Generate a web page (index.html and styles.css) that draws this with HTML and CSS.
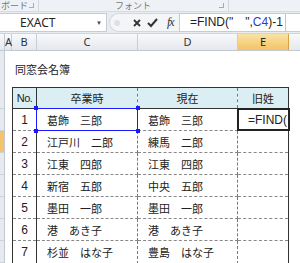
FILE: index.html
```html
<!DOCTYPE html>
<html lang="ja">
<head>
    <meta charset="UTF-8">
    <title>同窓会名簿</title>
    <link rel="stylesheet" href="styles.css">
</head>
<body>

<div class="ribbon">
    <div class="group clip"><span class="label">ボード</span><i class="launcher"></i></div>
    <div class="group font"><span class="label">フォント</span><i class="launcher"></i></div>
    <div class="group rest"></div>
</div>

<div class="formula-bar">
    <div class="name-box"><span>EXACT</span><span class="arrow">▼</span></div>
    <div class="fx-tools">
        <span class="grip"></span>
        <svg class="tool" width="10" height="10" viewBox="0 0 10 10">
            <path d="M2 2 L8 8 M8 2 L2 8" stroke="#333" stroke-width="1.8" fill="none"/>
        </svg>
        <svg class="tool" width="11" height="10" viewBox="0 0 11 10">
            <path d="M1 5 L4 8 L10 1" stroke="#333" stroke-width="2" fill="none"/>
        </svg>
        <span class="fx">fx</span>
    </div>
    <div class="formula">
        <span class="text">=FIND("　",<span class="ref">C4</span>)-1</span>
        <span class="caret"></span>
    </div>
</div>

<div class="col-headers">
    <div class="corner"></div>
    <div class="col a">A</div>
    <div class="col b">B</div>
    <div class="col c">C</div>
    <div class="col d">D</div>
    <div class="col e active">E</div>
    <div class="col f"></div>
</div>

<div class="sheet">
    <div class="row-heads">
        <div class="rh" style="height: 58px"></div>
        <div class="rh" style="height: 22px"></div>
        <div class="rh active" style="height: 22px"></div>
        <div class="rh"></div>
        <div class="rh"></div>
        <div class="rh"></div>
        <div class="rh"></div>
        <div class="rh"></div>
    </div>
    <div class="cells">
        <div class="title">同窓会名簿</div>
        <table class="roster">
            <colgroup>
                <col class="w-no">
                <col class="w-old">
                <col class="w-now">
                <col class="w-maiden">
            </colgroup>
            <tr class="head">
                <th class="no">No.</th>
                <th>卒業時</th>
                <th>現在</th>
                <th>旧姓</th>
            </tr>
            <tr>
                <td class="no">1</td>
                <td class="name ref-cell">葛飾　三郎<span class="sel"><i class="h tl"></i><i class="h tr"></i><i class="h bl"></i><i class="h br"></i></span></td>
                <td class="name">葛飾　三郎</td>
                <td class="editing"><span class="edit-box">=FIND(</span></td>
            </tr>
            <tr>
                <td class="no">2</td>
                <td class="name">江戸川　二郎</td>
                <td class="name">練馬　二郎</td>
                <td></td>
            </tr>
            <tr>
                <td class="no">3</td>
                <td class="name">江東　四郎</td>
                <td class="name">江東　四郎</td>
                <td></td>
            </tr>
            <tr>
                <td class="no">4</td>
                <td class="name">新宿　五郎</td>
                <td class="name">中央　五郎</td>
                <td></td>
            </tr>
            <tr>
                <td class="no">5</td>
                <td class="name">墨田　一郎</td>
                <td class="name">墨田　一郎</td>
                <td></td>
            </tr>
            <tr>
                <td class="no">6</td>
                <td class="name">港　あき子</td>
                <td class="name">港　あき子</td>
                <td></td>
            </tr>
            <tr>
                <td class="no">7</td>
                <td class="name">杉並　はな子</td>
                <td class="name">豊島　はな子</td>
                <td></td>
            </tr>
        </table>
    </div>
</div>

</body>
</html>
```

FILE: styles.css
```css
body {
    margin: 0;
    width: 300px;
    height: 263px;
    overflow: hidden;
    background-color: #fff;
    font-family: "Noto Sans CJK JP", "Noto Sans", sans-serif;
    color: #222;
}

/* リボン下端 */
.ribbon {
    display: flex;
    height: 11px;
    background-color: #eef1f5;
    border-bottom: 1px solid #d6dbe2;
    font-size: 9px;
    line-height: 11px;
    color: #777;
    overflow: hidden;
}

.group {
    display: flex;
    align-items: center;
    border-right: 1px solid #d2d7de;
    box-sizing: border-box;
}

.group.clip {
    width: 39px;
    padding-left: 1px;
}

.group.font {
    width: 190px;
    padding-left: 76px;
}

.group.rest {
    flex: 1;
    border-right: none;
}

.launcher {
    width: 4px;
    height: 4px;
    border-right: 1px solid #aaa;
    border-bottom: 1px solid #aaa;
    margin-left: auto;
    margin-right: 4px;
}

/* 数式バー */
.formula-bar {
    display: flex;
    height: 19px;
    padding: 1px 0;
    background-color: #e9ecf0;
    border-bottom: 1px solid #cfd5dc;
}

.name-box {
    display: flex;
    align-items: center;
    width: 107px;
    background-color: #fff;
    border: 1px solid #c5ccd4;
    border-left: none;
    box-sizing: border-box;
    font-family: "Noto Sans", sans-serif;
    font-size: 12px;
    padding-left: 20px;
    color: #222;
}

.name-box .arrow {
    margin-left: auto;
    margin-right: 4px;
    font-size: 6px;
    color: #444;
}

.fx-tools {
    display: flex;
    align-items: center;
    width: 70px;
    margin-left: 2px;
    background-color: #f4f5f7;
    border: 1px solid #d3d8de;
    border-right: none;
    border-radius: 10px 0 0 10px;
    box-sizing: border-box;
}

.grip {
    width: 6px;
    height: 6px;
    border-radius: 50%;
    background-color: #dde1e6;
    margin-left: 4px;
    margin-right: 12px;
}

.tool {
    margin-right: 5px;
}

.fx {
    font-family: "Liberation Serif", serif;
    font-style: italic;
    font-size: 12px;
    color: #333;
    margin-left: 4px;
    letter-spacing: -1px;
}

.formula {
    display: flex;
    align-items: center;
    flex: 1;
    background-color: #fff;
    border: 1px solid #c5ccd4;
    border-right: none;
    box-sizing: border-box;
    padding-left: 10px;
    font-family: "Liberation Sans", sans-serif;
    font-size: 12px;
    color: #222;
}

.formula .ref {
    color: #2b3bd6;
}

.caret {
    width: 1px;
    height: 17px;
    background-color: #c0c6cd;
    margin-left: 2px;
}

/* 列見出し */
.col-headers {
    display: flex;
    height: 16px;
    background: linear-gradient(#f8f9fb, #e5e8ed);
    border-bottom: 1px solid #c2c9d2;
    font-family: "Noto Sans", sans-serif;
    font-size: 11px;
    line-height: 16px;
    color: #333;
}

.corner {
    width: 4px;
    border-right: 1px solid #c2c9d2;
}

.col {
    text-align: center;
    border-right: 1px solid #c8ced6;
    box-sizing: border-box;
}

.col.a { width: 7px; }
.col.b { width: 25px; }
.col.c { width: 101px; }
.col.d { width: 100px; }
.col.e { width: 51px; }
.col.f { flex: 1; border-right: none; }

.col.active {
    background: linear-gradient(#fbe2a6, #f3c463);
    border-right-color: #d9a33c;
    color: #222;
}

/* シート */
.sheet {
    display: flex;
}

.row-heads {
    width: 4px;
    background-color: #e6e9ee;
    border-right: 1px solid #c2c9d2;
}

.rh {
    height: 22px;
    border-bottom: 1px solid #cdd3da;
    box-sizing: border-box;
}

.rh.active {
    background-color: #f4c46a;
}

.cells {
    flex: 1;
    font-size: 11px;
}

.title {
    padding: 11px 0 0 10px;
    height: 25px;
    line-height: 15px;
}

.roster {
    border-collapse: collapse;
    margin-left: 7px;
    table-layout: fixed;
    width: 277px;
}

.w-no { width: 24px; }
.w-old { width: 101px; }
.w-now { width: 100px; }
.w-maiden { width: 51px; }

.roster th,
.roster td {
    border-left: 1px dashed #777;
    border-right: 1px dashed #777;
    border-bottom: 1px dashed #888;
    height: 21px;
    padding: 0;
    font-weight: normal;
    white-space: nowrap;
    overflow: hidden;
}

.roster tr:last-child td {
    height: 22px;
}

.roster .head th {
    background-color: #daeef3;
    border-top: 1px solid #333;
    border-bottom: 1px solid #333;
    height: 20px;
    text-align: center;
}

.roster .no {
    border-left: 1px solid #333;
    border-right: 1px solid #333;
    text-align: center;
    font-family: "Liberation Sans", sans-serif;
    font-size: 12px;
}

.roster .head .no {
    font-family: "Liberation Sans Narrow", "Liberation Sans", sans-serif;
    font-size: 11px;
    letter-spacing: -0.5px;
}

.roster td:last-child,
.roster th:last-child {
    border-right: 1px solid #333;
}

.roster .name {
    padding-left: 10px;
}

.roster td.ref-cell {
    position: relative;
    overflow: visible;
}

.sel {
    position: absolute;
    left: -1px;
    top: -1px;
    right: -1px;
    bottom: -1px;
    border: 1px solid #1a1aff;
}

.sel .h {
    position: absolute;
    width: 4px;
    height: 4px;
    background-color: #1a1aff;
}

.h.tl { left: -3px; top: -3px; }
.h.tr { right: -3px; top: -3px; }
.h.bl { left: -3px; bottom: -3px; }
.h.br { right: -3px; bottom: -3px; }

.roster td.editing {
    position: relative;
    overflow: visible;
}

.edit-box {
    position: absolute;
    left: -1px;
    top: -1px;
    right: -2px;
    bottom: -1px;
    border: 2px solid #222;
    padding-left: 9px;
    line-height: 20px;
    font-family: "Liberation Sans", sans-serif;
    font-size: 12px;
    overflow: hidden;
    background-color: #fff;
}
```
